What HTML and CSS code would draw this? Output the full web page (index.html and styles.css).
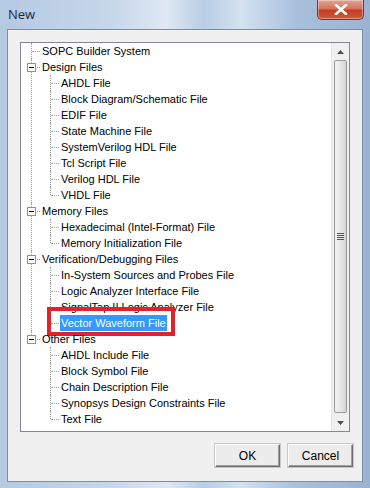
FILE: index.html
```html
<!DOCTYPE html>
<html lang="en">
<head>
  <meta charset="UTF-8" />
  <title>New</title>
  <link rel="stylesheet" href="styles.css">
</head>
<body>

  <div class="window">
    <div class="titlebar">
      <span class="title">New</span>
      <button class="close-btn" aria-label="Close">
        <svg width="14" height="11" viewBox="0 0 14 11">
          <path d="M2 1 L12 10 M12 1 L2 10" stroke="#fff" stroke-width="2.6" stroke-linecap="round" />
        </svg>
      </button>
    </div>

    <div class="client">
      <div class="tree-box">
        <div class="tree-scroll">
          <ul class="tree">
            <li><span class="label">SOPC Builder System</span></li>
            <li class="open"><span class="toggle"></span><span class="label">Design Files</span>
              <ul>
                <li><span class="label">AHDL File</span></li>
                <li><span class="label">Block Diagram/Schematic File</span></li>
                <li><span class="label">EDIF File</span></li>
                <li><span class="label">State Machine File</span></li>
                <li><span class="label">SystemVerilog HDL File</span></li>
                <li><span class="label">Tcl Script File</span></li>
                <li><span class="label">Verilog HDL File</span></li>
                <li class="last"><span class="label">VHDL File</span></li>
              </ul>
            </li>
            <li class="open"><span class="toggle"></span><span class="label">Memory Files</span>
              <ul>
                <li><span class="label">Hexadecimal (Intel-Format) File</span></li>
                <li class="last"><span class="label">Memory Initialization File</span></li>
              </ul>
            </li>
            <li class="open"><span class="toggle"></span><span class="label">Verification/Debugging Files</span>
              <ul>
                <li><span class="label">In-System Sources and Probes File</span></li>
                <li><span class="label">Logic Analyzer Interface File</span></li>
                <li><span class="label">SignalTap II Logic Analyzer File</span></li>
                <li class="last"><span class="label selected">Vector Waveform File</span><span class="mark-box"></span></li>
              </ul>
            </li>
            <li class="open last"><span class="toggle"></span><span class="label">Other Files</span>
              <ul>
                <li><span class="label">AHDL Include File</span></li>
                <li><span class="label">Block Symbol File</span></li>
                <li><span class="label">Chain Description File</span></li>
                <li><span class="label">Synopsys Design Constraints File</span></li>
                <li class="last"><span class="label">Text File</span></li>
              </ul>
            </li>
          </ul>
        </div>

        <div class="scrollbar">
          <div class="sb-arrow">
            <svg width="7" height="4" viewBox="0 0 7 4"><path d="M0 4 L3.5 0 L7 4 Z" fill="#4d4d4d" /></svg>
          </div>
          <div class="sb-thumb">
            <span class="grip"></span>
          </div>
          <div class="sb-arrow">
            <svg width="7" height="4" viewBox="0 0 7 4"><path d="M0 0 L3.5 4 L7 0 Z" fill="#4d4d4d" /></svg>
          </div>
        </div>
      </div>

      <div class="buttons">
        <button class="btn">OK</button>
        <button class="btn">Cancel</button>
      </div>
    </div>
  </div>

</body>
</html>
```

FILE: styles.css
```css
body {
  margin: 0;
  font-family: "Liberation Sans", Arial, sans-serif;
  font-size: 11px;
  color: #000;
  background: #fff;
}

.window {
  width: 370px;
  height: 488px;
  box-sizing: border-box;
  padding: 0 7px 6px 7px;
  display: flex;
  flex-direction: column;
  background: linear-gradient(90deg, #b4c9e2 0%, #c6d7ea 30%, #dfe8f3 45%, #b9cde4 55%, #d4e1ef 65%, #a9c0dc 80%, #9bb3d2 100%);
}

/* title bar */

.titlebar {
  height: 29px;
  display: flex;
  align-items: flex-start;
  justify-content: space-between;
  flex-shrink: 0;
}

.title {
  font-family: "Open Sans", "Noto Sans", sans-serif;
  font-size: 13px;
  color: #1b2a3a;
  margin-top: 5px;
  margin-left: 1px;
}

.close-btn {
  width: 47px;
  height: 20px;
  margin-right: -1px;
  padding: 0;
  border: 1px solid #6b3b34;
  border-top: none;
  border-radius: 0 0 5px 5px;
  background: linear-gradient(#e3a393 0%, #d5745e 45%, #c23d22 55%, #cf5a3c 100%);
  box-shadow: inset 0 0 0 1px rgba(255, 255, 255, 0.35);
  display: flex;
  align-items: center;
  justify-content: center;
}

/* client area */

.client {
  flex: 1;
  background: #f0f0f0;
  border: 1px solid #7b8ea8;
  padding: 12px 11px 0 12px;
  display: flex;
  flex-direction: column;
}

.tree-box {
  width: 330px;
  height: 390px;
  box-sizing: border-box;
  border: 1px solid #828790;
  background: #fff;
  display: flex;
}

.tree-scroll {
  flex: 1;
  overflow: hidden;
}

/* tree */

.tree,
.tree ul {
  list-style: none;
  margin: 0;
}

.tree {
  padding: 0 0 0 10px;
}

.tree ul {
  padding: 0 0 0 9px;
}

.tree li {
  position: relative;
  padding-left: 10px;
  line-height: 16px;
  white-space: nowrap;
}

/* vertical connector */
.tree li::before {
  content: "";
  position: absolute;
  left: 0;
  top: 0;
  height: 100%;
  border-left: 1px dotted #a0a0a0;
}

.tree li.last::before {
  height: 8px;
}

/* horizontal connector */
.tree li::after {
  content: "";
  position: absolute;
  left: 1px;
  top: 8px;
  width: 8px;
  border-top: 1px dotted #a0a0a0;
}

.toggle {
  position: absolute;
  left: -4px;
  top: 4px;
  width: 9px;
  height: 9px;
  box-sizing: border-box;
  border: 1px solid #919191;
  background: #fff;
  z-index: 1;
}

.toggle::after {
  content: "";
  position: absolute;
  left: 1px;
  top: 3px;
  width: 5px;
  height: 1px;
  background: #000;
}

.label {
  display: inline-block;
  padding: 0 1px;
  height: 16px;
}

.label.selected {
  background: #3399ff;
  color: #fff;
  padding: 0 1px;
}

.mark-box {
  position: absolute;
  left: -3px;
  top: -8px;
  width: 128px;
  height: 29px;
  box-sizing: border-box;
  border: 4px solid #e42028;
}

/* scrollbar */

.scrollbar {
  width: 17px;
  background: #f0f0f0;
  border-left: 1px solid #e6e6e6;
  display: flex;
  flex-direction: column;
  align-items: center;
}

.sb-arrow {
  height: 17px;
  width: 17px;
  display: flex;
  align-items: center;
  justify-content: center;
  flex-shrink: 0;
}

.sb-thumb {
  flex: 1;
  width: 13px;
  margin: 0 0 1px;
  box-sizing: border-box;
  border: 1px solid #999;
  border-radius: 2px;
  background: linear-gradient(90deg, #f3f3f3 0%, #e6e6e6 50%, #d4d4d4 100%);
  display: flex;
  align-items: center;
  justify-content: center;
}

.grip {
  width: 7px;
  height: 7px;
  background: repeating-linear-gradient(#555 0 1px, transparent 1px 2px);
}

/* buttons */

.buttons {
  display: flex;
  gap: 8px;
  justify-content: flex-end;
  margin-top: 12px;
  margin-right: -2px;
}

.btn {
  width: 65px;
  height: 23px;
  padding: 0;
  font-family: "Liberation Sans", Arial, sans-serif;
  font-size: 12px;
  color: #000;
  background: #ececec;
  border: 1px solid;
  border-color: #fff #6d6d6d #6d6d6d #fff;
  box-shadow: inset -1px -1px 0 #a0a0a0, 0 0 0 1px #c8c8c8;
}
```
